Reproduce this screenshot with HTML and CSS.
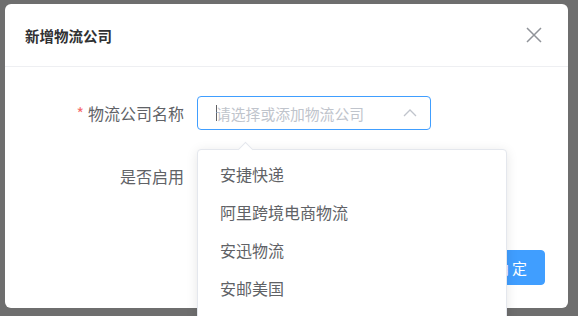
FILE: index.html
```html
<!DOCTYPE html>
<html lang="zh-CN">
<head>
    <meta charset="UTF-8">
    <meta name="viewport" content="width=device-width, initial-scale=1.0">
    <title>新增物流公司</title>
    <link rel="stylesheet" href="styles.css">
</head>
<body>
    <div class="dialog">
        <div class="dialog-header">
            <span class="dialog-title">新增物流公司</span>
            <span class="dialog-close">
                <svg width="16" height="16" viewBox="0 0 16 16">
                    <path d="M1 1 L15 15 M15 1 L1 15" stroke="#909399" stroke-width="1.5" fill="none"/>
                </svg>
            </span>
        </div>
        <div class="dialog-body">
            <div class="form-item">
                <label class="form-label"><span class="required">*</span>物流公司名称</label>
                <div class="select">
                    <div class="select-input">
                        <span class="caret"></span>
                        <span class="placeholder">请选择或添加物流公司</span>
                        <svg class="select-arrow" width="14" height="8" viewBox="0 0 14 8">
                            <path d="M1 7 L7 1 L13 7" stroke="#c0c4cc" stroke-width="1.3" fill="none"/>
                        </svg>
                    </div>
                    <!-- 下拉列表 -->
                    <div class="dropdown">
                        <div class="dropdown-arrow"></div>
                        <ul class="dropdown-list">
                            <li>安捷快递</li>
                            <li>阿里跨境电商物流</li>
                            <li>安迅物流</li>
                            <li>安邮美国</li>
                        </ul>
                    </div>
                </div>
            </div>
            <div class="form-item">
                <label class="form-label">是否启用</label>
                <div class="switch"></div>
            </div>
        </div>
        <div class="dialog-footer">
            <button class="btn">取 消</button>
            <button class="btn btn-primary">确 定</button>
        </div>
    </div>
</body>
</html>
```

FILE: styles.css
```css
body {
    font-family: "Noto Sans CJK SC", "Noto Sans", sans-serif;
    background-color: #6e6e6e;
    margin: 0;
    padding: 4px 10px 0 5px;
    height: 316px;
    box-sizing: border-box;
    overflow: hidden;
}
.dialog {
    position: relative;
    width: 563px;
    height: 304px;
    background-color: #fff;
    border-radius: 6px;
}
.dialog-header {
    display: flex;
    align-items: center;
    justify-content: space-between;
    height: 62px;
    padding: 0 26px 0 20px;
    border-bottom: 1px solid #eeeff2;
}
.dialog-title {
    font-size: 14.5px;
    font-weight: 600;
    color: #303133;
}
.dialog-close {
    display: flex;
}
.dialog-body {
    padding-top: 29px;
}
.form-item {
    display: flex;
    align-items: center;
    height: 34px;
    margin-bottom: 29px;
}
.form-label {
    width: 192px;
    box-sizing: border-box;
    padding-right: 13px;
    text-align: right;
    font-size: 16px;
    color: #606266;
}
.required {
    color: #f56c6c;
    margin-right: 4px;
}
.select {
    position: relative;
}
.select-input {
    display: flex;
    align-items: center;
    width: 234px;
    height: 34px;
    box-sizing: border-box;
    padding: 0 12px 0 18px;
    border: 1px solid #409eff;
    border-radius: 4px;
}
.caret {
    width: 1px;
    height: 16px;
    margin-right: -1px;
    background-color: #606266;
}
.placeholder {
    flex: 1;
    font-size: 14.8px;
    color: #c0c4cc;
}
.select-arrow {
    margin-right: 1px;
}
.dropdown {
    position: absolute;
    top: 53px;
    left: 0;
    width: 310px;
    height: 240px;
    background-color: #fff;
    border: 1px solid #e4e7ed;
    border-radius: 4px;
    box-shadow: 0 2px 12px rgba(0, 0, 0, 0.1);
    box-sizing: border-box;
    z-index: 10;
}
.dropdown-arrow {
    position: absolute;
    top: -6px;
    left: 42px;
    width: 10px;
    height: 10px;
    background-color: #fff;
    border-top: 1px solid #e4e7ed;
    border-left: 1px solid #e4e7ed;
    transform: rotate(45deg);
}
.dropdown-list {
    list-style: none;
    margin: 0;
    padding: 5px 0;
}
.dropdown-list li {
    height: 38px;
    line-height: 38px;
    padding: 0 22px;
    font-size: 16px;
    color: #606266;
}
.dialog-footer {
    display: flex;
    justify-content: flex-end;
    gap: 12px;
    padding: 28px 23px 0 0;
}
.btn {
    height: 35px;
    padding: 0 17px;
    font-family: inherit;
    font-size: 15px;
    color: #606266;
    background-color: #fff;
    border: 1px solid #dcdfe6;
    border-radius: 4px;
}
.btn-primary {
    color: #fff;
    background-color: #409eff;
    border-color: #409eff;
}
```
